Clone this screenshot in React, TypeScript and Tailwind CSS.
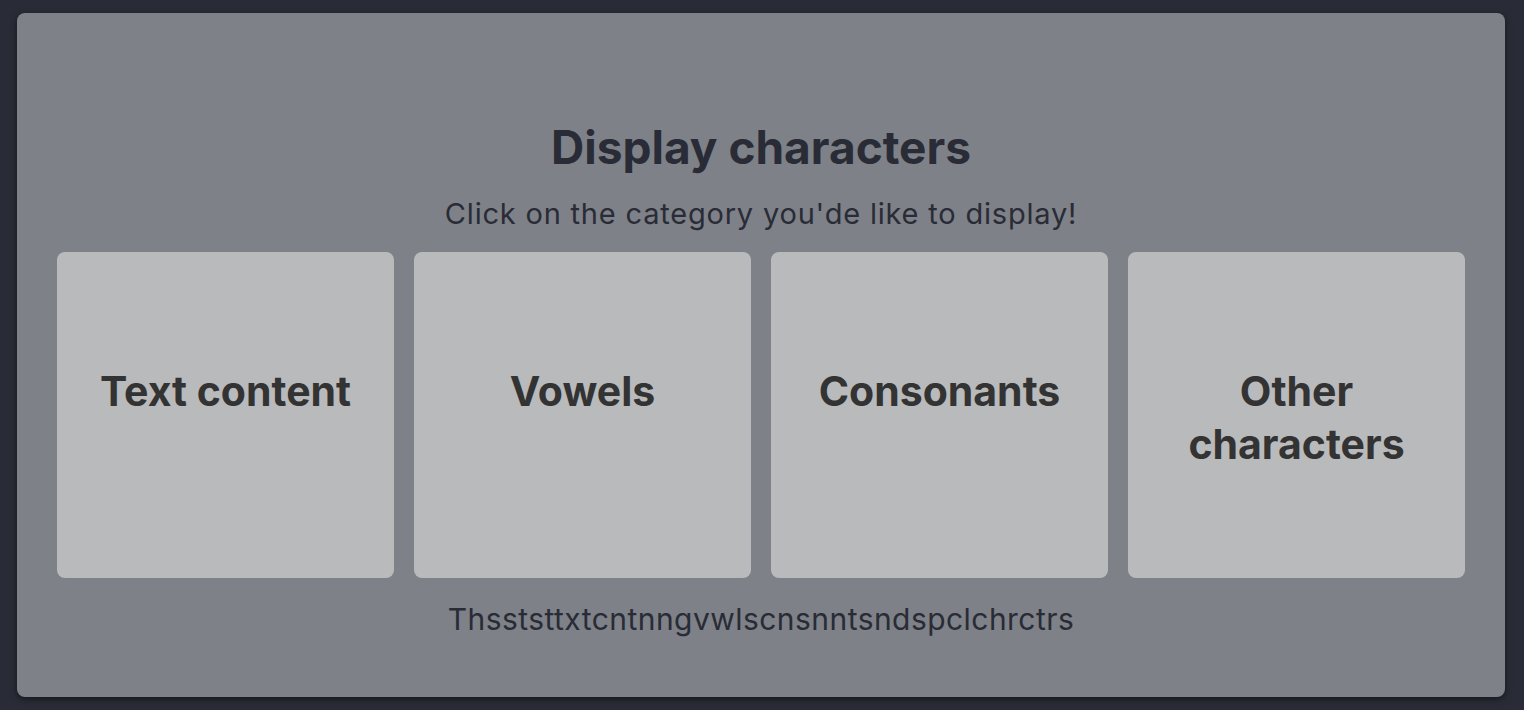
export default function App() {
  const cards = ["Text content", "Vowels", "Consonants", "Other characters"];

  return (
    <div className="min-h-screen bg-[#292c36] pl-[17px] pr-[19px] pt-[13px] pb-[13px]" style={{ fontFamily: "Inter, 'Noto Sans', sans-serif" }}>
      <div className="flex h-[684px] flex-col items-center rounded-lg bg-[#7e8187] px-10 pt-[104px] shadow-[0_2px_6px_rgba(0,0,0,0.5)]">
        <h1 className="text-[46px] font-bold leading-[60px] text-[#292c36]">Display characters</h1>
        <p className="mt-[17px] text-[29px] leading-[40px] tracking-[0.8px] text-[#292c36]">Click on the category you'de like to display!</p>
        <div className="mt-[18px] grid w-full grid-cols-4 gap-5">
          {cards.map((c) => (
            <button
              key={c}
              className="flex h-[326px] flex-col items-center justify-start rounded-lg bg-[#b9babc] px-6 pt-[113px] text-center text-[41px] font-bold leading-[53px] text-[#333333]"
            >
              {c}
            </button>
          ))}
        </div>
        <p className="mt-[21px] text-[30px] leading-[40px] tracking-[0.45px] text-[#292c36]">Thsststtxtcntnngvwlscnsnntsndspclchrctrs</p>
      </div>
    </div>
  );
}
